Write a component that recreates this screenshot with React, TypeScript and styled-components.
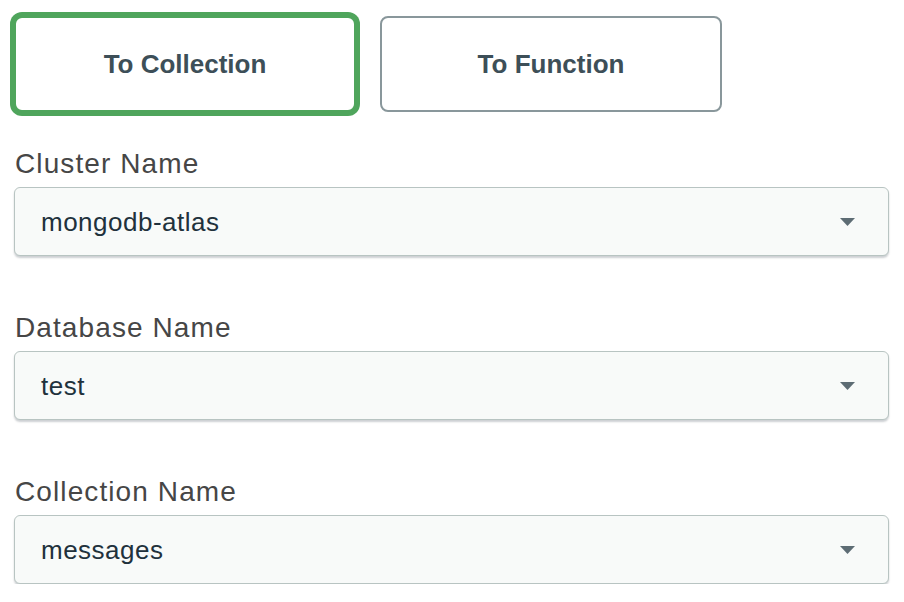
import React, { useState } from 'react';
import styled, { createGlobalStyle } from 'styled-components';

const GlobalStyle = createGlobalStyle`
  html, body {
    margin: 0;
    padding: 0;
    background: #fff;
  }
  body {
    font-family: "Liberation Sans", Arial, sans-serif;
  }
`;

interface Field {
  label: string;
  value: string;
}

const fields: Field[] = [
  { label: 'Cluster Name', value: 'mongodb-atlas' },
  { label: 'Database Name', value: 'test' },
  { label: 'Collection Name', value: 'messages' },
];

const App: React.FC = () => {
  const [target, setTarget] = useState<'collection' | 'function'>('collection');

  return (
    <>
      <GlobalStyle />
      <Page>
        <ToggleRow>
          <ToggleButton active={target === 'collection'} onClick={() => setTarget('collection')}>
            To Collection
          </ToggleButton>
          <ToggleButton active={target === 'function'} onClick={() => setTarget('function')}>
            To Function
          </ToggleButton>
        </ToggleRow>
        <Fields>
          {fields.map(field => (
            <FieldGroup key={field.label}>
              <Label>{field.label}</Label>
              <Select>
                <SelectValue>{field.value}</SelectValue>
                <Caret viewBox="0 0 15 8" aria-hidden>
                  <path d="M0 0 H15 L7.5 8 Z" />
                </Caret>
              </Select>
            </FieldGroup>
          ))}
        </Fields>
      </Page>
    </>
  );
};

export default App;

// Styled Components
const Page = styled.div`
  padding: 16px 15px 0 14px;
`;

const ToggleRow = styled.div`
  display: flex;
  gap: 24px;
`;

const ToggleButton = styled.button<{ active: boolean }>`
  width: 342px;
  height: 96px;
  box-sizing: border-box;
  background: #fff;
  border: 2px solid ${props => (props.active ? '#4fa55c' : '#89979b')};
  border-radius: 8px;
  box-shadow: ${props => (props.active ? '0 0 0 4px #4fa55c' : 'none')};
  font-family: "Liberation Sans", Arial, sans-serif;
  font-weight: 700;
  font-size: 26px;
  color: #3d4f58;
  cursor: pointer;
  padding: 0;
`;

const Fields = styled.div`
  display: flex;
  flex-direction: column;
  gap: 55px;
  margin-top: 35px;
`;

const FieldGroup = styled.div`
  display: flex;
  flex-direction: column;
  gap: 6px;
`;

const Label = styled.label`
  font-size: 28px;
  line-height: 34px;
  color: #464646;
  letter-spacing: 1.1px;
  padding-left: 1px;
`;

const Select = styled.div`
  height: 69px;
  box-sizing: border-box;
  display: flex;
  align-items: center;
  justify-content: space-between;
  padding: 2px 33px 0 26px;
  background: #f8faf9;
  border: 1px solid #b8c4c2;
  border-radius: 6px;
  box-shadow: 0 2px 2px rgba(6, 22, 33, 0.2);
`;

const SelectValue = styled.span`
  font-size: 26px;
  color: #21313c;
  letter-spacing: 0.5px;
`;

const Caret = styled.svg`
  width: 15px;
  height: 8px;
  fill: #5d6c74;
  margin-top: -2px;
`;
